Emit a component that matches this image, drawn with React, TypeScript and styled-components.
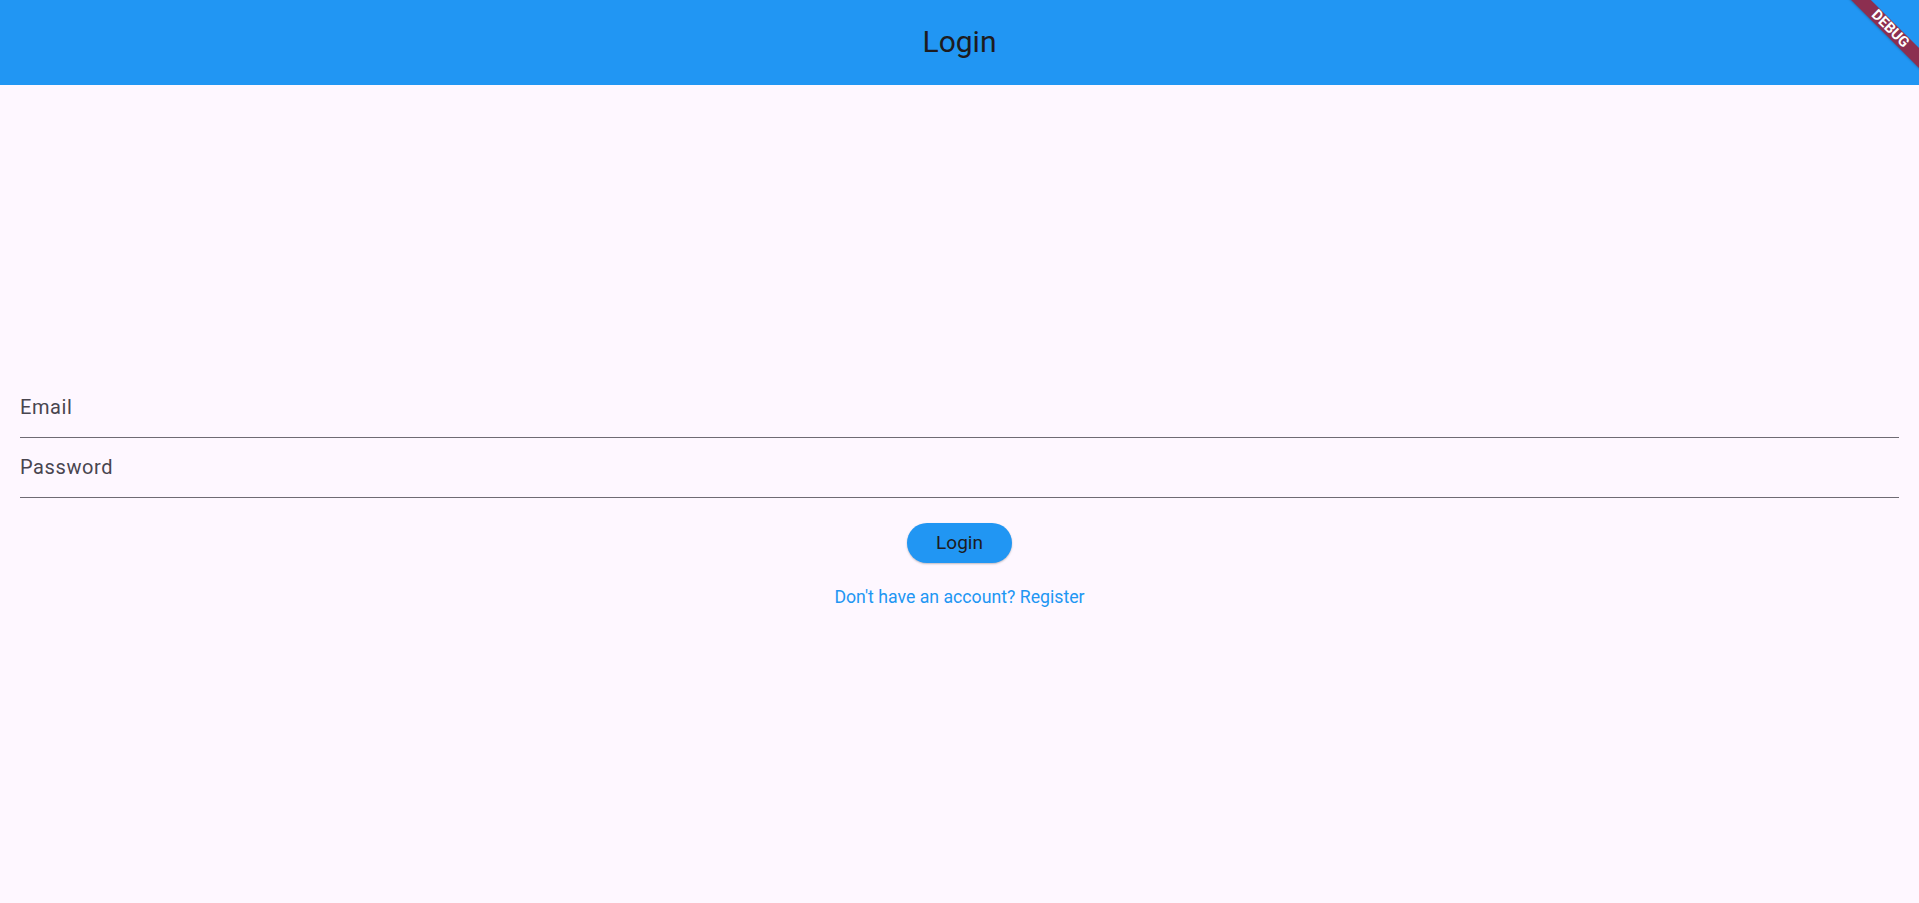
import React from "react";
import styled, { createGlobalStyle } from "styled-components";

const Global = createGlobalStyle`
  html, body {
    margin: 0;
    padding: 0;
    background: #fef7ff;
    font-family: Roboto, "Noto Sans", sans-serif;
  }
  * { box-sizing: border-box; }
`;

const Page = styled.div`
  position: relative;
  height: 903px;
  display: flex;
  flex-direction: column;
  overflow: hidden;
  background: #fef7ff;
`;

const Header = styled.header`
  height: 85px;
  flex: 0 0 85px;
  background: #2196f3;
  display: flex;
  align-items: center;
  justify-content: center;
  padding-bottom: 2px;
`;

const Title = styled.h1`
  margin: 0;
  font-size: 30px;
  font-weight: 400;
  color: #1d1b20;
  line-height: 1;
`;

const Body = styled.main`
  flex: 1;
  display: flex;
  flex-direction: column;
  justify-content: center;
  padding: 0 20px 3px;
`;

const Field = styled.label`
  height: 60px;
  display: flex;
  align-items: center;
  padding-bottom: 1px;
  border-bottom: 1px solid #6f6b74;
`;

const FieldLabel = styled.span`
  font-size: 20px;
  letter-spacing: 0.6px;
  color: #49454f;
`;

const Actions = styled.div`
  display: flex;
  flex-direction: column;
  align-items: center;
  margin-top: 25px;
`;

const Button = styled.button`
  width: 105px;
  height: 40px;
  border: none;
  border-radius: 20px;
  background: #2196f3;
  color: #1d1b20;
  font-family: Roboto, sans-serif;
  font-size: 19px;
  font-weight: 400;
  box-shadow: 0 1px 2px rgba(0, 0, 0, 0.25);
  cursor: pointer;
`;

const Link = styled.a`
  margin-top: 24.5px;
  font-size: 17.7px;
  color: #2196f3;
  line-height: 20px;
  cursor: pointer;
`;

const Ribbon = styled.div`
  position: absolute;
  top: 0;
  right: 0;
  width: 100px;
  height: 100px;
  overflow: hidden;
  pointer-events: none;
`;

const RibbonBand = styled.div`
  position: absolute;
  width: 160px;
  height: 14px;
  left: -8.6px;
  top: 21.6px;
  transform-origin: 50% 50%;
  transform: rotate(45deg);
  background: #8c2f50;
  color: #fff;
  font-family: Roboto, sans-serif;
  font-weight: 700;
  font-size: 14.5px;
  line-height: 14px;
  text-align: center;
  box-shadow: 0 1px 2px rgba(0, 0, 0, 0.2);
`;

export default function App() {
  return (
    <Page>
      <Global />
      <Header>
        <Title>Login</Title>
      </Header>
      <Body>
        <Field>
          <FieldLabel>Email</FieldLabel>
        </Field>
        <Field>
          <FieldLabel>Password</FieldLabel>
        </Field>
        <Actions>
          <Button>Login</Button>
          <Link>Don't have an account? Register</Link>
        </Actions>
      </Body>
      <Ribbon>
        <RibbonBand>DEBUG</RibbonBand>
      </Ribbon>
    </Page>
  );
}
